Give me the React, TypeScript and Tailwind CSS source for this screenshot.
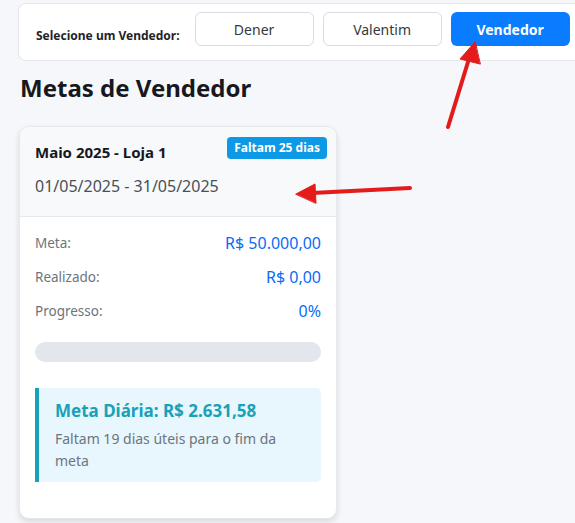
const SELLERS = ["Dener", "Valentim", "Vendedor"];

function Arrows() {
  return (
    <svg
      className="pointer-events-none absolute left-0 top-0"
      width={575}
      height={523}
      viewBox="0 0 575 523"
    >
      <g fill="#e31b1b" stroke="#e31b1b" strokeLinecap="round">
        <line x1={448} y1={127} x2={468} y2={62} strokeWidth={4} />
        <polygon points="475,42 460,59 480,64" strokeWidth={1} strokeLinejoin="round" />
        <line x1={410} y1={188} x2={312} y2={193} strokeWidth={4} />
        <polygon points="296,194 315,184 316,203" strokeWidth={1} strokeLinejoin="round" />
      </g>
    </svg>
  );
}

export default function App() {
  const selected = "Vendedor";

  return (
    <div
      className="relative h-[523px] w-[575px] overflow-hidden bg-[#f5f7fa] text-[#212529]"
      style={{ fontFamily: '"Noto Sans", "Open Sans", sans-serif' }}
    >
      <div className="ml-[18px] mt-[3px] flex h-[58px] w-[580px] items-start rounded-l-lg border border-[#e3e6eb] bg-white pl-[17px] pt-[8px]">
        <span className="mr-[15px] self-center text-[12px] font-bold text-[#1f2328]">
          Selecione um Vendedor:
        </span>
        <div className="flex gap-[9px]">
          {SELLERS.map((name) => (
            <button
              key={name}
              className={`h-[34px] w-[119px] rounded-md text-[14px] ${
                name === selected
                  ? "bg-[#0a7cff] font-bold text-white"
                  : "border border-[#d9dce1] bg-white text-[#343a40]"
              }`}
            >
              {name}
            </button>
          ))}
        </div>
      </div>

      <h1 className="ml-[20px] mt-[12px] text-[24px] font-bold leading-[30px] text-[#16181d]">
        Metas de Vendedor
      </h1>

      <div className="ml-[19px] mt-[23px] w-[318px] overflow-hidden rounded-[10px] border border-[#e6e8ec] bg-white shadow-[0_3px_6px_rgba(0,0,0,0.12)]">
        <div className="border-b border-[#e6e8ec] bg-[#f8f9fb] pb-[18px] pl-[15px] pr-[9px] pt-[10px]">
          <div className="flex items-start justify-between">
            <h2 className="mt-[4px] text-[15px] font-bold text-[#16181d]">Maio 2025 - Loja 1</h2>
            <span className="rounded-[4px] bg-[#0d99e5] px-[7px] py-[3px] text-[12px] font-bold leading-[16px] text-white">
              Faltam 25 dias
            </span>
          </div>
          <p className="mt-[10px] text-[16px] leading-[24px] text-[#495057]">01/05/2025 - 31/05/2025</p>
        </div>

        <div className="px-[15px] pb-[36px] pt-[14px]">
          <div className="flex flex-col gap-[10px]">
            <div className="flex h-[24px] items-center justify-between">
              <span className="mt-[2px] text-[13.5px] text-[#6c757d]">Meta:</span>
              <span className="text-[16px] text-[#0a6cf5]">R$ 50.000,00</span>
            </div>
            <div className="flex h-[24px] items-center justify-between">
              <span className="mt-[2px] text-[13.5px] text-[#6c757d]">Realizado:</span>
              <span className="text-[16px] text-[#0a6cf5]">R$ 0,00</span>
            </div>
            <div className="flex h-[24px] items-center justify-between">
              <span className="mt-[2px] text-[13.5px] text-[#6c757d]">Progresso:</span>
              <span className="text-[16px] text-[#0a6cf5]">0%</span>
            </div>
          </div>

          <div className="mt-[19px] h-[20px] w-full rounded-full bg-[#e3e6ec]" />

          <div className="mt-[26px] rounded-r-[5px] border-l-4 border-[#17a2b8] bg-[#e8f6fd] pb-[10px] pl-[16px] pr-[16px] pt-[10px]">
            <h3 className="text-[17px] font-bold leading-[25px] text-[#17a2b8]">Meta Diária: R$ 2.631,58</h3>
            <p className="mt-[5px] text-[14px] leading-[22px] text-[#6c757d]">
              Faltam 19 dias úteis para o fim da meta
            </p>
          </div>
        </div>
      </div>

      <Arrows />
    </div>
  );
}
